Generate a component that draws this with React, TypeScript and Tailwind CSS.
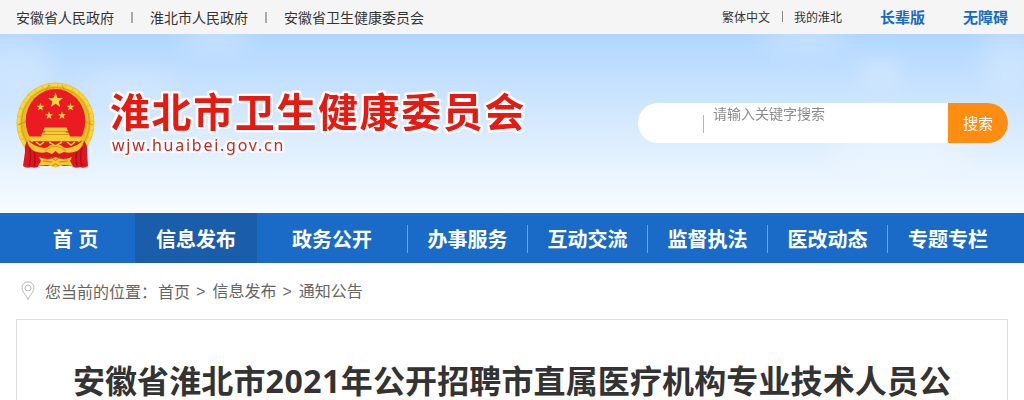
import { clsx } from 'clsx';

const topLinks = ['安徽省人民政府', '淮北市人民政府', '安徽省卫生健康委员会'];

const navItems = [
  { label: '首 页', width: 'w-[119px]' },
  { label: '信息发布', width: 'w-[122px]', active: true },
  { label: '政务公开', width: 'w-[151px]', divider: true },
  { label: '办事服务', width: 'w-[120px]', divider: true },
  { label: '互动交流', width: 'w-[120px]', divider: true },
  { label: '监督执法', width: 'w-[120px]', divider: true },
  { label: '医改动态', width: 'w-[120px]', divider: true },
  { label: '专题专栏', width: 'w-[120px]' },
];

const crumbs = ['首页', '信息发布', '通知公告'];

// Five-pointed star, unit radius
const STAR = '0,-1 .24,-.32 .95,-.31 .38,.12 .59,.81 0,.4 -.59,.81 -.38,.12 -.95,-.31 -.24,-.32';

const stars = [
  { x: 39.5, y: 18.5, r: 8 },
  { x: 24.5, y: 25, r: 4.2 },
  { x: 54.5, y: 25, r: 4.2 },
  { x: 33, y: 33.5, r: 4.2 },
  { x: 46, y: 33.5, r: 4.2 },
];

function Emblem() {
  return (
    <svg width="80" height="87" viewBox="0 0 80 87" className="shrink-0">
      {/* wheat wreath */}
      <ellipse cx="39.5" cy="41" rx="39" ry="40.500" fill="#ecba22" />
      <ellipse cx="39.5" cy="41" rx="36.8" ry="38.3" fill="none" stroke="#f7d63f" strokeWidth="3" strokeDasharray="7 .8" />
      <ellipse cx="39.5" cy="41" rx="34" ry="35.5" fill="none" stroke="#d49e1b" strokeWidth=".9" />
      <path d="M33 3l-3 6M46 3l3 6M2 43l9-4M77 43l-9-4" stroke="#cd951a" strokeWidth="1" />
      <ellipse cx="39.5" cy="39" rx="29.8" ry="32" fill="#ea1b22" />
      {stars.map((s, i) => (
        <polygon key={i} points={STAR} fill="#fbd83b" transform={`translate(${s.x} ${s.y}) scale(${s.r})`} />
      ))}
      {/* red drapes */}
      <path d="M12 58q10 6 27.500 6t27.500-6q5 4 4 12l1 14q-4 3-8 1-5 2-8-1H23q-3 3-8 1-4 2-8-1l2-14q-1-8 3-12z" fill="#dc171f" />
      <path d="M13 65q3 9 0 19M18 70q2 6 0 14M66 65q-3 9 0 19M61 70q-2 6 0 14" fill="none" stroke="#a50f18" strokeWidth="1.2" />
      {/* gate tower */}
      <path d="M28.500 45.500h22l1.500 3.500H27zM29 49h21v2H29zM26.500 50.500h26l1.500 4H25zM13 54.500h53l-2 5H15z" fill="#f6cd35" />
      <path d="M27.500 49.300h24M26 52.500h27" stroke="#c88e18" strokeWidth=".8" />
      <path d="M17 59.500h45v6H17z" fill="#e01b21" />
      <path d="M20 60l4 3 4-3M51 60l4 3 4-3M33 60l6.500 4 6.500-4" fill="none" stroke="#f5ca32" strokeWidth="1.500" />
      {/* cog and ribbons */}
      <path d="M11 56q4 8 17 10 4 0 6-3h11q2 3 6 3 13-2 17-10 0 9-7 13-7 3-13 1l-5 2-3.500-3-3.500 3-5-2q-6 2-13-1-7-4-7-13z" fill="#f4c831" />
      <path d="M29 69q10-9 21 0" fill="none" stroke="#d49a1b" strokeWidth="1.2" />
      <path d="M23 75q9 4 16.500 0 7.500 4 16.500 0l-2 4 3 5-9-1-8.500 2.500-8.500-2.500-9 1 3-5z" fill="#f4c831" />
      <path d="M27 79l9 1M52 79l-9 1M35 75.500l4.500 3 4.500-3M36 84l3.500-2 3.500 2" fill="none" stroke="#c2831a" strokeWidth="1" />
    </svg>
  );
}

// Faint clouds over the header gradient
function Clouds() {
  return (
    <svg className="absolute inset-0" width="1024" height="179" viewBox="0 0 1024 179">
      <defs>
        <filter id="soft" x="-60%" y="-150%" width="220%" height="400%">
          <feGaussianBlur stdDeviation="12" />
        </filter>
      </defs>
      <g fill="#fff" filter="url(#soft)">
        <ellipse cx="15" cy="30" rx="40" ry="28" opacity=".22" />
        <ellipse cx="130" cy="50" rx="50" ry="14" opacity=".2" />
        <ellipse cx="215" cy="5" rx="38" ry="10" opacity=".32" />
        <ellipse cx="805" cy="6" rx="45" ry="10" opacity=".32" />
        <ellipse cx="880" cy="38" rx="22" ry="14" opacity=".28" />
        <ellipse cx="1010" cy="25" rx="30" ry="32" opacity=".22" />
        <ellipse cx="900" cy="120" rx="75" ry="18" opacity=".3" />
      </g>
    </svg>
  );
}

function TopBar() {
  return (
    <div className="flex h-[34px] items-center justify-between bg-[#f5f5f5] px-4 text-[#333]">
      <div className="flex items-center text-sm">
        {topLinks.map((link, i) => (
          <div key={link} className="flex items-center">
            {i > 0 && <span className="mr-[17px] ml-[17px] h-[11px] w-[2px] bg-[#aaa]" />}
            <a>{link}</a>
          </div>
        ))}
      </div>
      <div className="flex items-center text-xs">
        <a>繁体中文</a>
        <span className="mr-[11px] ml-3 h-[11px] w-px bg-[#888]" />
        <a>我的淮北</a>
        <a className="ml-[38px] text-[15px] font-bold text-[#1a6bc7]">长辈版</a>
        <a className="ml-[38px] text-[15px] font-bold text-[#1a6bc7]">无障碍</a>
      </div>
    </div>
  );
}

function SearchBox() {
  return (
    <div className="mt-[69px] flex h-10 w-[370px] overflow-hidden rounded-full bg-white">
      <span className="mt-3 ml-[65px] h-[18px] w-px bg-[#b5b5b5]" />
      <span className="ml-[9px] flex-1 text-sm leading-[20px] text-[#8c8c8c]">请输入关键字搜索</span>
      <button className="w-[60px] bg-[#ff8d12] text-[15px] text-white">搜索</button>
    </div>
  );
}

function Header() {
  return (
    <header className="relative h-[179px] bg-linear-to-b from-[#b0d6ff] via-[#d6eafe] to-[#f8fcff]">
      <Clouds />
      <div className="relative flex justify-between px-4">
        <div className="mt-12 flex">
          <Emblem />
          <div className="ml-[14px] text-[#e71a12] [text-shadow:2px_0_1px_#fff,-2px_0_1px_#fff,0_2px_1px_#fff,0_-2px_1px_#fff,2px_2px_1px_#fff,-2px_-2px_1px_#fff,2px_-2px_1px_#fff,-2px_2px_1px_#fff]">
            <h1 className="mt-1 text-[40px] leading-[48px] font-bold tracking-[1.6px] whitespace-nowrap">淮北市卫生健康委员会</h1>
            <p className="ml-0.5 font-['Noto_Sans'] text-base leading-[22px] tracking-[1.75px] text-[#cf2520]">wjw.huaibei.gov.cn</p>
          </div>
        </div>
        <SearchBox />
      </div>
    </header>
  );
}

function Nav() {
  return (
    <nav className="flex h-[50px] bg-[#1a6bc7] px-4 text-xl font-bold text-white">
      {navItems.map(item => (
        <a
          key={item.label}
          className={clsx('flex items-center justify-center pt-0.5', item.width, item.active && 'bg-[#195dab]')}
        >
          <span className="flex-1 text-center [word-spacing:1px]">{item.label}</span>
          {item.divider && <span className="h-7 w-px bg-[#6ba2e0]" />}
        </a>
      ))}
    </nav>
  );
}

function Breadcrumb() {
  return (
    <div className="flex h-14 items-center px-4 text-base text-[#666]">
      <svg width="14" height="20" viewBox="0 0 14 20" fill="none" stroke="#b5b5b5" className="mr-[10px] ml-[5px]">
        <path d="M7 18.500C5.500 15 1 10.500 1 6.800a6 6 0 0 1 12 0C13 10.500 8.500 15 7 18.500z" />
        <circle cx="7" cy="7" r="3" />
      </svg>
      <span className="mr-px">您当前的位置：</span>
      {crumbs.map((crumb, i) => (
        <span key={crumb}>
          {i > 0 && <span className="mr-[7px] ml-[6px] font-['Liberation_Sans']">&gt;</span>}
          {crumb}
        </span>
      ))}
    </div>
  );
}

export default function App() {
  return (
    <div className="h-[400px] w-[1024px] overflow-hidden bg-white font-['Noto_Sans_CJK_SC',sans-serif]">
      <TopBar />
      <Header />
      <Nav />
      <Breadcrumb />
      <main className="mx-4 h-[81px] border border-b-0 border-[#ddd] pt-[36px]">
        <h2 className="text-center text-[32px] leading-[46px] font-bold tracking-[.12px] whitespace-nowrap text-[#333]">
          安徽省淮北市<span className="font-['Noto_Sans'] tracking-[.5px]">2021</span>年公开招聘市直属医疗机构专业技术人员公
        </h2>
      </main>
    </div>
  );
}
